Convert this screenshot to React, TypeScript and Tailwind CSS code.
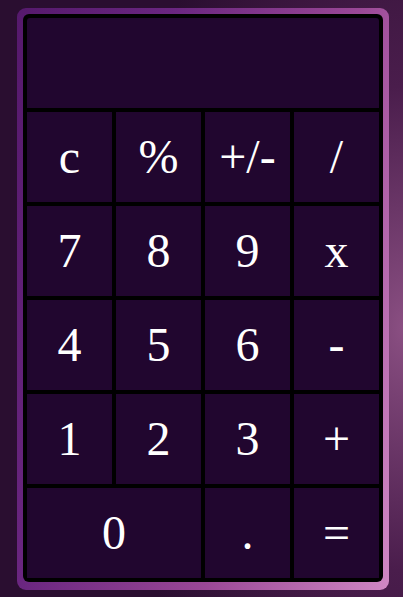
import React from "react";

const KEYS: { label: string; wide?: boolean }[] = [
  { label: "c" }, { label: "%" }, { label: "+/-" }, { label: "/" },
  { label: "7" }, { label: "8" }, { label: "9" }, { label: "x" },
  { label: "4" }, { label: "5" }, { label: "6" }, { label: "-" },
  { label: "1" }, { label: "2" }, { label: "3" }, { label: "+" },
  { label: "0", wide: true }, { label: "." }, { label: "=" },
];

export default function App() {
  return (
    <main className="w-[403px] h-[597px] overflow-hidden pt-2 pl-[17px] bg-[radial-gradient(ellipse_70%_90%_at_100%_55%,#8a4f82_0%,#4a1d4c_45%,#2a0e30_100%)]">
      {/* Frame */}
      <div className="w-[372px] h-[582px] rounded-[9px] p-[6px] pb-2 bg-[linear-gradient(105deg,#55196c_0%,#6a2680_30%,#9a4896_65%,#d088c4_100%)]">
        <div
          className="h-[568px] rounded-[6px] bg-black p-1 grid grid-cols-4 grid-rows-6 gap-1"
          style={{ fontFamily: '"Liberation Serif", "Times New Roman", serif' }}
        >
          {/* Display */}
          <div className="col-span-4 bg-[#21062f] rounded-t-[3px]" />
          {KEYS.map((k) => (
            <button
              key={k.label}
              className={`${k.wide ? "col-span-2" : ""} bg-[#21062f] text-white text-[48px] leading-none flex items-center justify-center`}
            >
              {k.label}
            </button>
          ))}
        </div>
      </div>
    </main>
  );
}
